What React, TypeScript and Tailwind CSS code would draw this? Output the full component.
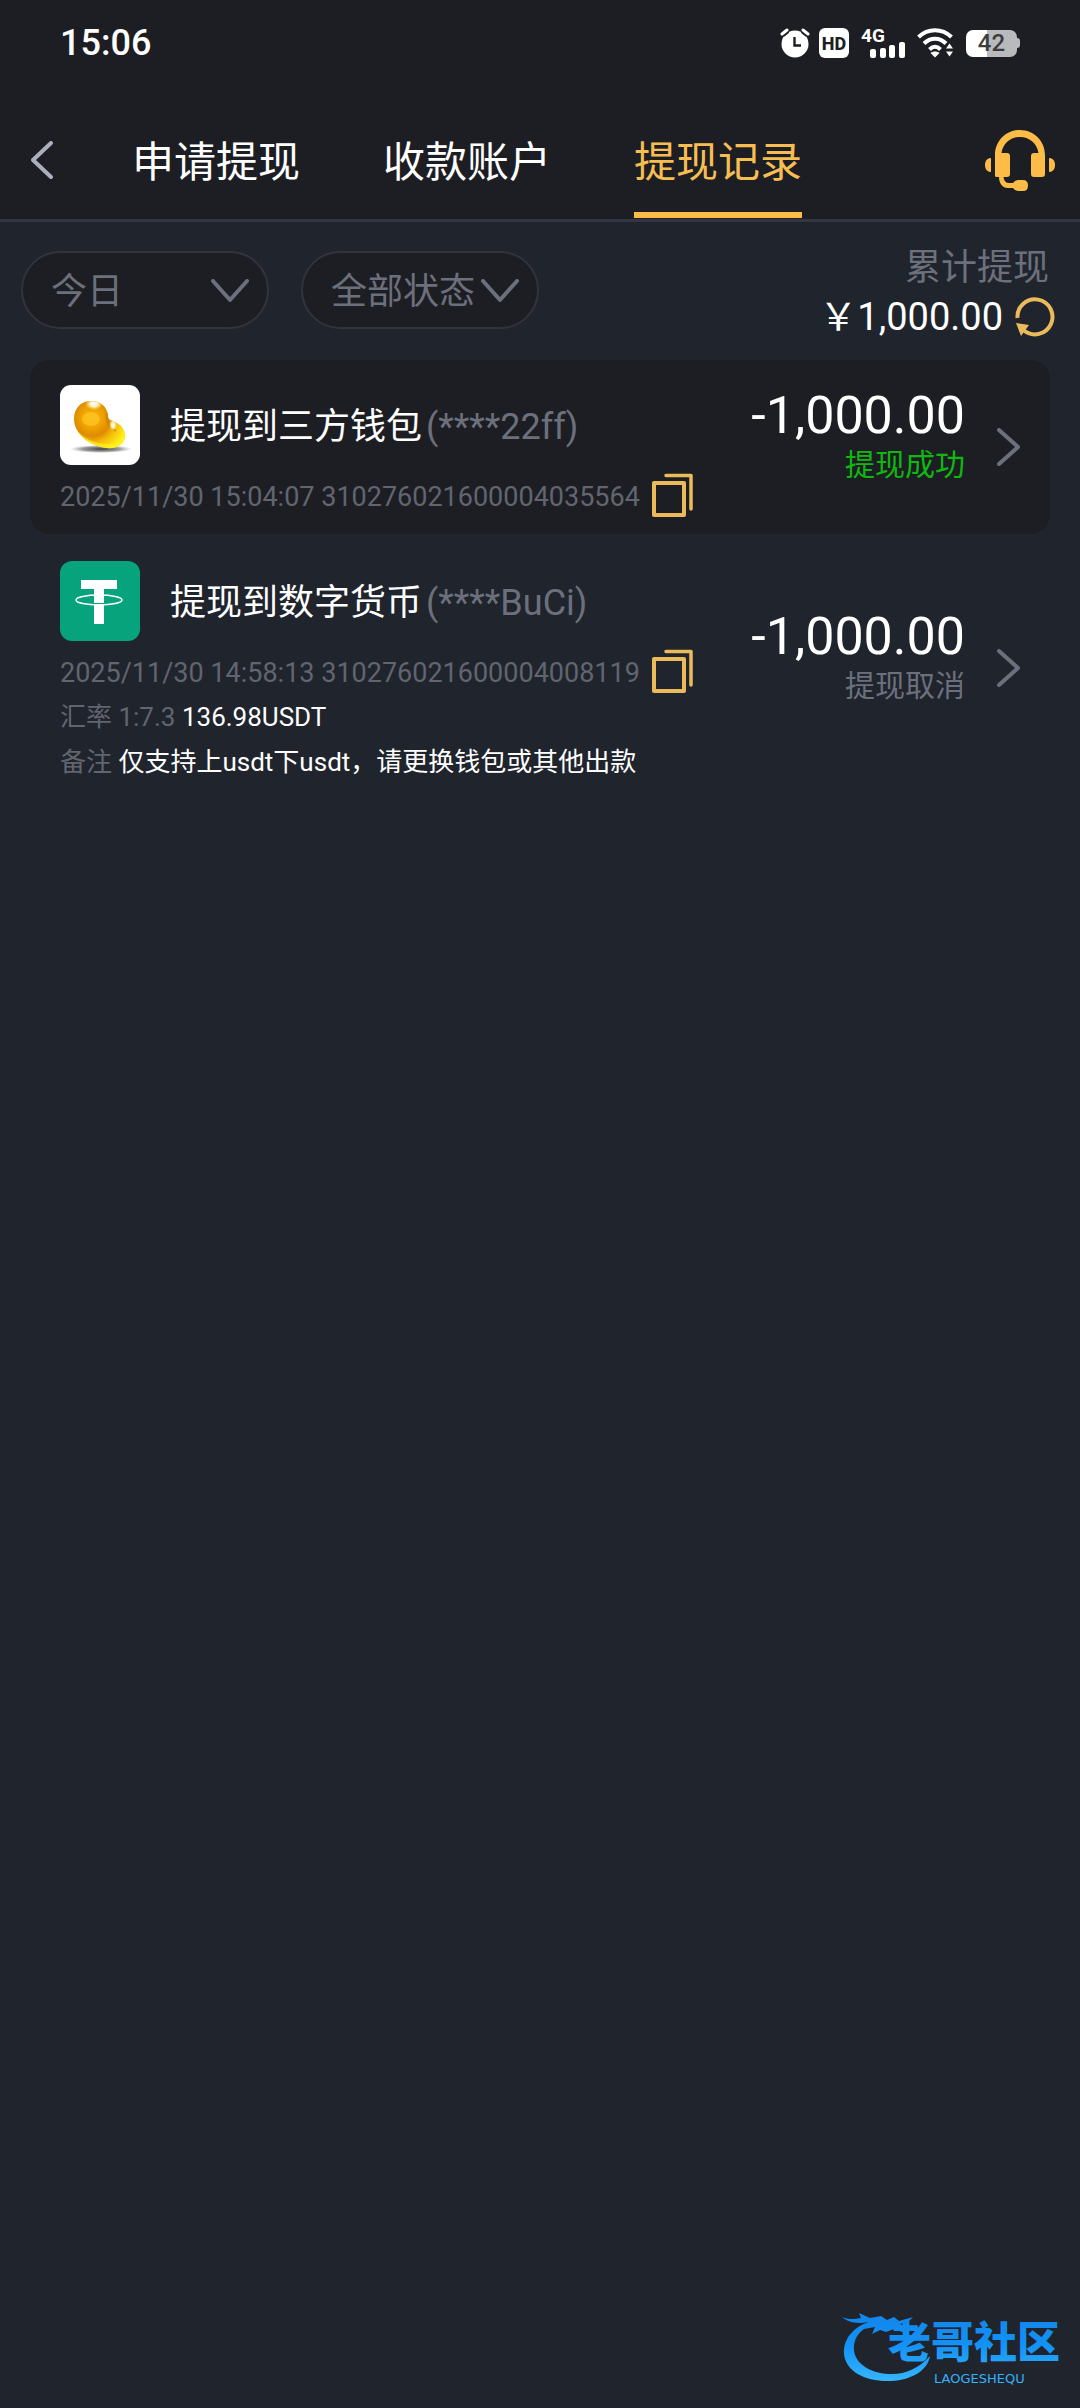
import React, { useState } from 'react';

const TABS = ['申请提现', '收款账户', '提现记录'];

interface WithdrawRecord {
  id: string;
  method: string;
  account: string;
  time: string;
  amount: string;
  status: string;
  success: boolean;
  icon: React.ReactNode;
  rate?: string;
  received?: string;
  remark?: string;
}

const BeanIcon = () => (
  <svg viewBox="0 0 80 80" className="w-20 h-20">
    <defs>
      <radialGradient id="beanBody" gradientUnits="userSpaceOnUse" cx="32" cy="33" r="36">
        <stop offset="0" stopColor="#f9b70f" />
        <stop offset="0.3" stopColor="#efa200" />
        <stop offset="0.5" stopColor="#dd8b02" />
        <stop offset="0.7" stopColor="#f6bd08" />
        <stop offset="1" stopColor="#fdf01c" />
      </radialGradient>
      <radialGradient id="beanShine">
        <stop offset="0" stopColor="#ffffff" />
        <stop offset="0.45" stopColor="#fff9d8" stopOpacity="0.9" />
        <stop offset="1" stopColor="#ffe36a" stopOpacity="0" />
      </radialGradient>
      <radialGradient id="beanShadow">
        <stop offset="0" stopColor="#2b2b2b" stopOpacity="0.9" />
        <stop offset="0.6" stopColor="#555555" stopOpacity="0.6" />
        <stop offset="1" stopColor="#888888" stopOpacity="0" />
      </radialGradient>
      <clipPath id="beanClip">
        <path d="M14 34C14 23 21 16 31 16C41 16 47 22 48 30C48 35 51 35 55 37C62 40 66 46 65 52C64 60 56 64 46 63C30 61 14 49 14 34Z" />
      </clipPath>
    </defs>
    <rect width="80" height="80" rx="11" fill="#ffffff" />
    <ellipse cx="41" cy="64" rx="31" ry="4" fill="url(#beanShadow)" />
    <g clipPath="url(#beanClip)">
      <rect x="12" y="14" width="56" height="52" fill="url(#beanBody)" />
      <path d="M14 42C24 55 36 59 48 59C57 59 62 56 66 50V66H14Z" fill="#fff21e" opacity="0.7" />
      <path d="M47 28C46 35 48 42 56 46" fill="none" stroke="#c87c00" strokeWidth="2" opacity="0.6" />
      <ellipse cx="31" cy="34" rx="9" ry="7" fill="#ffc626" opacity="0.7" />
      <ellipse cx="34" cy="19" rx="9" ry="6" fill="url(#beanShine)" />
      <ellipse cx="53" cy="40" rx="4" ry="6" fill="url(#beanShine)" />
    </g>
  </svg>
);

const TetherIcon = () => (
  <svg viewBox="0 0 80 80" className="w-20 h-20">
    <rect width="80" height="80" rx="12" fill="#06a37c" />
    <path d="M21 19H57V28H44V63H34V28H21Z" fill="#ffffff" />
    <ellipse cx="39" cy="39" rx="23" ry="5" fill="none" stroke="#ffffff" strokeWidth="1.5" />
    <path d="M34 42.5H44" stroke="#06a37c" strokeWidth="1" />
  </svg>
);

const RECORDS: WithdrawRecord[] = [
  {
    id: '310276021600004035564',
    method: '提现到三方钱包',
    account: '(****22ff)',
    time: '2025/11/30 15:04:07',
    amount: '-1,000.00',
    status: '提现成功',
    success: true,
    icon: <BeanIcon />,
  },
  {
    id: '310276021600004008119',
    method: '提现到数字货币',
    account: '(****BuCi)',
    time: '2025/11/30 14:58:13',
    amount: '-1,000.00',
    status: '提现取消',
    success: false,
    icon: <TetherIcon />,
    rate: '1:7.3',
    received: '136.98USDT',
    remark: '仅支持上usdt下usdt，请更换钱包或其他出款',
  },
];

const StatusBar = () => (
  <div className="h-[86px] px-[60px] flex items-center justify-between text-white">
    <span className="text-[36px] leading-10 font-medium">15:06</span>
    <div className="flex items-center">
      {/* Alarm */}
      <svg viewBox="0 0 30 30" className="w-[30px] h-[30px] mr-[9px]" fill="none">
        <circle cx="15" cy="16" r="13.5" fill="#ffffff" />
        <path d="M2 6L7 2M28 6L23 2" stroke="#1d1e23" strokeWidth="7" />
        <path d="M2 6L7 2M28 6L23 2" stroke="#ffffff" strokeWidth="3" strokeLinecap="round" />
        <path d="M14.5 9V17.5H21" stroke="#1d1e23" strokeWidth="2.4" />
      </svg>
      {/* HD */}
      <span className="w-[30px] h-[30px] mr-3 rounded-[6px] bg-white text-[#1d1e23] text-[18px] font-extrabold flex items-center justify-center">
        HD
      </span>
      {/* Signal */}
      <svg viewBox="0 -4 44 40" className="w-[44px] h-[40px] mr-3" fill="#ffffff">
        <text x="0" y="15" fontSize="19" fontWeight="700">4G</text>
        <rect x="9" y="22" width="6" height="9" rx="2" />
        <rect x="19" y="21" width="6" height="10" rx="2" />
        <rect x="28" y="18" width="6" height="13" rx="2" />
        <rect x="38" y="15" width="6" height="16" rx="2" />
      </svg>
      {/* Wifi */}
      <svg viewBox="0 0 38 30" className="w-[38px] h-[30px] mr-[11px]" fill="none" stroke="#ffffff" strokeWidth="4">
        <path d="M1.5 9C11 0 25 0 34.5 9" />
        <path d="M7 15.5C13.5 9 22.5 9 29 15.5" />
        <path d="M12.5 21.5C16 18 20 18 23.5 21.5" />
        <path d="M13.5 25L18 29.500L22.5 25C20 23 16 23 13.5 25Z" fill="#ffffff" stroke="none" />
        <path d="M29 20.5L32.5 15.5L36 20.5ZM29 23.5L32.5 28.5L36 23.5Z" fill="#ffffff" stroke="none" />
      </svg>
      {/* Battery */}
      <span className="w-[51px] h-[27px] rounded-[7px] bg-linear-to-r from-white from-42% to-[#b9babc] to-42% text-[#3c3d41] text-[24px] font-medium flex items-center justify-center">
        42
      </span>
      <span className="w-[3px] h-2.5 rounded-r-full bg-[#b9babc]" />
    </div>
  </div>
);

const CopyIcon = () => (
  <svg viewBox="0 0 41 44" className="w-[41px] h-[44px]" fill="none" stroke="#ebbb5b" strokeLinecap="round" strokeLinejoin="round">
    <rect x="2" y="10" width="30" height="32" strokeWidth="4" />
    <path d="M14 2.5H39V36" strokeWidth="3.5" />
  </svg>
);

interface FilterSelectProps {
  label: string;
  options: string[];
  widthClass: string;
}

const FilterSelect: React.FC<FilterSelectProps> = ({ label, options, widthClass }) => (
  <div className={`relative h-[78px] ${widthClass}`}>
    <select
      aria-label={label}
      className="appearance-none w-full h-full pl-7 pt-1 rounded-full border-2 border-[#31333d] bg-[#1d1e23] text-[#6c707c] text-[36px] focus:outline-none"
    >
      {options.map((option) => (
        <option key={option}>{option}</option>
      ))}
    </select>
    <svg viewBox="0 0 38 24" className="absolute right-5 top-7 w-[38px] h-6 pointer-events-none" fill="none" stroke="#6c707c" strokeWidth="4" strokeLinecap="round" strokeLinejoin="round">
      <path d="M2 2L19 21L36 2" />
    </svg>
  </div>
);

const RecordCard: React.FC<{ record: WithdrawRecord }> = ({ record }) => (
  <li className={`flex items-center rounded-[20px] px-[30px] py-[17px] ${record.success ? 'bg-[#1d1e23]' : ''}`}>
    <div className="flex-1 pt-2 text-[27px] text-[#61656f]">
      <div className="flex items-center">
        {record.icon}
        <h2 className="ml-[30px] pt-1 text-[36px] leading-[48px] text-white">
          {record.method}
          <span className="ml-1 text-[#6c707c]">{record.account}</span>
        </h2>
      </div>
      <div className="mt-2 h-11 flex items-center">
        <span className="pt-1 whitespace-nowrap">{record.time} {record.id}</span>
        <button type="button" aria-label="复制订单号" className="ml-3">
          <CopyIcon />
        </button>
      </div>
      {record.rate && (
        <p className="pt-1 text-[26px] leading-[41px]">
          汇率 {record.rate} <span className="text-white">{record.received}</span>
        </p>
      )}
      {record.remark && (
        <p className="pt-1 text-[26px] leading-[41px] whitespace-nowrap">
          备注 <span className="text-white">{record.remark}</span>
        </p>
      )}
    </div>
    <div className="pb-6 text-right">
      <p className="text-[52px] leading-[60px] text-white">{record.amount}</p>
      <p className={`text-[30px] leading-[38px] ${record.success ? 'text-[#0fb80f]' : 'text-[#6c707c]'}`}>{record.status}</p>
    </div>
    <button type="button" aria-label="查看详情" className="ml-8">
      <svg viewBox="0 0 23 38" className="w-[23px] h-[38px]" fill="none" stroke="#6c707c" strokeWidth="4" strokeLinecap="round" strokeLinejoin="round">
        <path d="M2 2L21 19L2 36" />
      </svg>
    </button>
  </li>
);

const Watermark = () => (
  <footer className="mt-auto pr-4 pb-5 flex justify-end">
    <svg viewBox="0 0 222 76" className="w-[222px] h-[76px]" role="img" aria-label="老哥社区">
      <defs>
        <linearGradient id="brand" x1="0" y1="0" x2="0" y2="72" gradientUnits="userSpaceOnUse">
          <stop offset="0" stopColor="#1385e8" />
          <stop offset="0.45" stopColor="#1391f5" />
          <stop offset="1" stopColor="#38b8fb" />
        </linearGradient>
      </defs>
      <g fill="url(#brand)">
        <path d="M34 8C14 12 1 25 2 42C4 60 24 70 49 69C70 68 86 58 88 44C76 57 62 63 47 62C27 61 13 51 12 38C11 26 19 15 34 12Z" />
        <path d="M0 5C7 8 13 7 19 6L17 1L28 6L39 4L45 8L52 5L57 9L71 5L66 10L58 12L71 17L60 20L52 17L44 20L38 18L30 22L33 15L22 17L26 10C16 12 7 11 0 5Z" />
        <text x="46" y="46" fontSize="43" fontWeight="900">老哥社区</text>
        <text x="92" y="71" fontSize="13" fontFamily="DejaVu Sans, sans-serif">LAOGESHEQU</text>
      </g>
    </svg>
  </footer>
);

export default function App() {
  const [activeTab, setActiveTab] = useState('提现记录');

  return (
    <div className="min-h-screen flex flex-col bg-[#20242d] font-['Roboto','Noto_Sans_CJK_SC',sans-serif]">
      <header className="bg-[#1d1e23] border-b-3 border-[#333741]">
        <StatusBar />
        <nav className="mt-4 pb-px flex items-center">
          <button type="button" aria-label="返回" className="ml-[31px] mr-[79px]">
            <svg viewBox="0 0 22 38" className="w-[22px] h-[38px]" fill="none" stroke="#a9b1bf" strokeWidth="4" strokeLinecap="round" strokeLinejoin="round">
              <path d="M20 2L2 19L20 36" />
            </svg>
          </button>
          <div className="flex gap-[83px]">
            {TABS.map((tab) => (
              <button
                key={tab}
                type="button"
                onClick={() => setActiveTab(tab)}
                className={`h-[116px] pt-1 text-[42px] border-y-6 border-t-transparent whitespace-nowrap ${
                  activeTab === tab ? 'text-[#f6bd52] border-b-[#fcbc47]' : 'text-white border-b-transparent'
                }`}
              >
                {tab}
              </button>
            ))}
          </div>
          {/* Customer service */}
          <button type="button" aria-label="在线客服" className="ml-auto mr-[25px]">
            <svg viewBox="0 0 70 61" className="w-[70px] h-[61px]" fill="#fcbc47">
              <path d="M10 46V25C10 11 21 0 35 0S60 11 60 25V44Q60 47 57 47H49Q46 47 46 44V26Q46 23 49 23H53.5C52 13 44 7 35 7S18 13 16.5 23H22Q25 23 25 26V44Q25 47 22 47H18.5C19 51 21 53 24 53H28Q30 50 33 50H38Q43 50 43 55.5T38 61H33Q30 61 28 58H23C17 58 14 53 14 47H12Q10 47 10 46Z" />
              <path d="M6 28V42C2 42 0 39 0 35S2 28 6 28ZM64 28V42C68 42 70 39 70 35S68 28 64 28Z" />
            </svg>
          </button>
        </nav>
      </header>

      <main>
        <div className="h-[138px] pl-[21px] pr-[25px] flex items-start">
          <div className="pt-[29px] flex gap-8">
            <FilterSelect label="日期" options={['今日', '昨日', '近7日', '近30日']} widthClass="w-[248px]" />
            <FilterSelect label="状态" options={['全部状态', '提现成功', '提现取消']} widthClass="w-[238px]" />
          </div>
          <div className="ml-auto pt-5 text-right">
            <p className="mr-1.5 text-[36px] leading-[52px] text-[#6c707c]">累计提现</p>
            <div className="flex items-center justify-end">
              <span className="text-[38px] leading-[46px] text-white">￥1,000.00</span>
              <button type="button" aria-label="刷新" className="ml-3">
                <svg viewBox="0 0 40 40" className="w-10 h-10" fill="none" stroke="#ebbb5b" strokeWidth="4">
                  <path d="M2.5 21A17.5 17.5 0 1 1 9 33.5" />
                  <path d="M1 26L14 28L6 39Z" fill="#ebbb5b" stroke="none" />
                </svg>
              </button>
            </div>
          </div>
        </div>

        <ul className="px-[30px] flex flex-col gap-0.5">
          {RECORDS.map((record) => (
            <RecordCard key={record.id} record={record} />
          ))}
        </ul>
      </main>

      <Watermark />
    </div>
  );
}
